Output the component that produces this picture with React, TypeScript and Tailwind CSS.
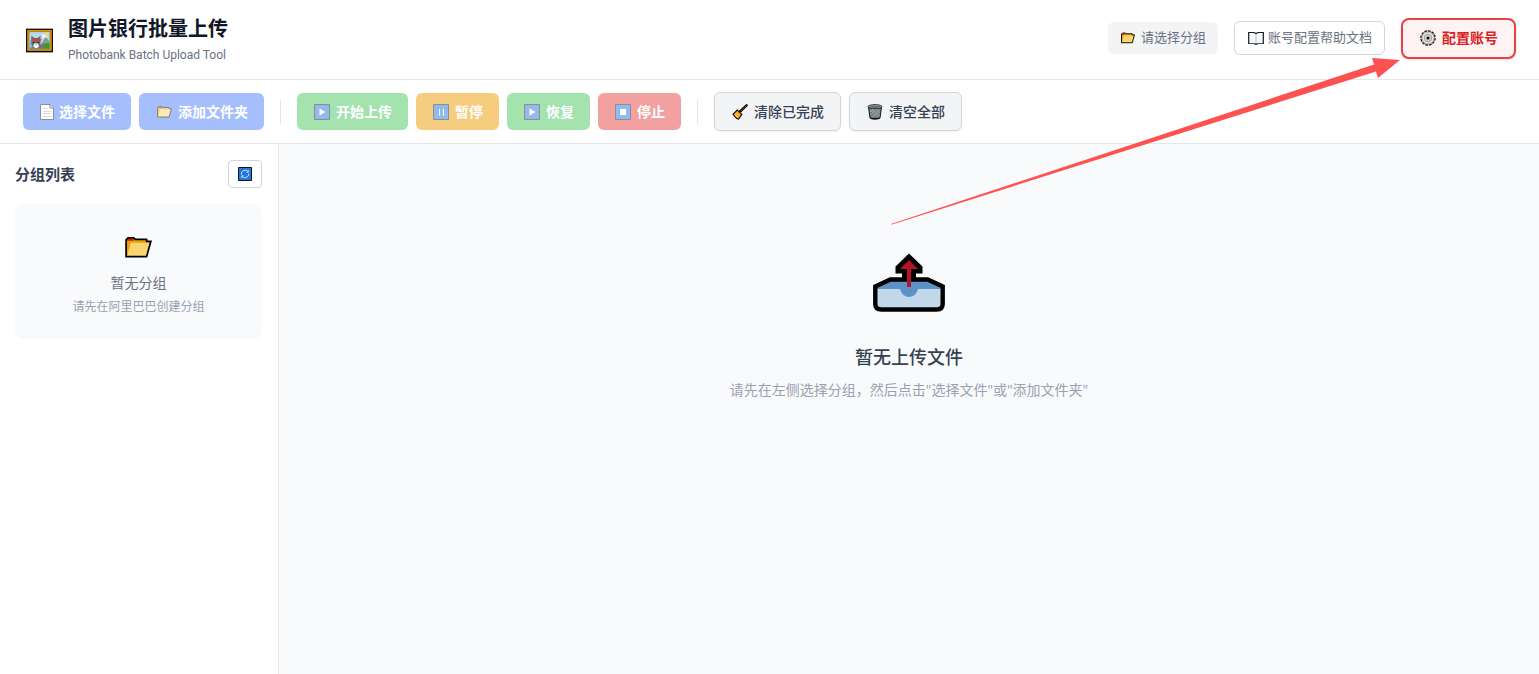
import React from 'react';
import clsx from 'clsx';

type IconProps = { className?: string };

function PictureIcon({ className }: IconProps) {
  return (
    <svg viewBox="0 0 28 26" className={className} aria-hidden="true">
      <rect x="0" y="0" width="28" height="26" fill="#aaa" />
      <rect x="0" y="1" width="28" height="24" fill="#0b0803" />
      <rect x="1.2" y="2" width="25.6" height="21.800" fill="#d99412" />
      <rect x="2.800" y="3.600" width="22.400" height="18.600" fill="#a8750f" />
      <rect x="3.500" y="4.300" width="21" height="17.400" fill="#b9d9f3" />
      <path d="M3.500 14l4-5 4 5v7.700h-8z" fill="#83b9e8" />
      <circle cx="22" cy="6.500" r="1.800" fill="#ffd75c" />
      <path d="M17 6.500h3v2h2v2h-5z" fill="#eef7fc" />
      <path d="M16 16l4.500-7 4 5v7.700H16z" fill="#7fa287" />
      <path d="M18 21.700l3.500-6h3v6z" fill="#31a30d" />
      <path d="M4 21.700c1-2.500 11-3.500 16-6l1.500 1-3 5z" fill="#707479" />
      <path d="M5.500 8l3 2.500h3.500l3-2.500v9l-2 3H7.500l-2-3z" fill="#666a72" />
      <path d="M6 11.500h9l1.500 1-1.500 .8H6z" fill="#e23d22" />
      <path d="M8.500 16h4l1 3-2 1.800H9.500l-2-1.800z" fill="#fff" />
      <path d="M7.500 14.500h1.200v1.200H7.500zM12 14.500h1.200v1.200H12z" fill="#111" />
      <path d="M9.600 17h2l-1 1.100z" fill="#e88478" />
    </svg>
  );
}

function FolderIcon({ className }: IconProps) {
  return (
    <svg viewBox="0 0 28 22" className={className} aria-hidden="true">
      <path d="M1 20.500V3l2-2h6l1.500 1.500h12V4.500H27l-4.500 16z" fill="#e8a30b" />
      <path d="M2 4V3l1.500-1.200h5L9 4z" fill="#e50c18" />
      <path d="M6 6h19.500l-3.500 14H2z" fill="#fbd572" />
      <path
        d="M1 20.500V3l2-2h6l1.500 1.500h12V4.500H27l-4.500 16z"
        fill="none"
        stroke="#000"
        strokeWidth="1.800"
      />
    </svg>
  );
}

function PageIcon({ className }: IconProps) {
  return (
    <svg viewBox="0 0 14 16" className={className} aria-hidden="true">
      <path d="M.5.5h9.500l3.500 3.500v11.500H.5z" fill="#fff" stroke="#222" />
      <path d="M10 .5v3.500h3.500" fill="#ddd" stroke="#222" />
      <path d="M2.500 4.500h5M2.500 7.500h9M2.500 9.500h9M2.500 12.500h9" stroke="#bbb" />
    </svg>
  );
}

function PlayIcon({ className }: IconProps) {
  return (
    <svg viewBox="0 0 16 16" className={className} aria-hidden="true">
      <path d="M.5.5h15v15H.5z" fill="#2878dc" stroke="#1c1f24" />
      <path d="M5.500 4.500l6 3.500-6 3.500z" fill="#fff" />
    </svg>
  );
}

function PauseIcon({ className }: IconProps) {
  return (
    <svg viewBox="0 0 16 16" className={className} aria-hidden="true">
      <path d="M.5.5h15v15H.5z" fill="#2878dc" stroke="#1c1f24" />
      <path d="M6.500 5v6.500M10.500 5v6.500" stroke="#fff" />
    </svg>
  );
}

function StopIcon({ className }: IconProps) {
  return (
    <svg viewBox="0 0 16 16" className={className} aria-hidden="true">
      <path d="M.5.5h15v15H.5z" fill="#2878dc" stroke="#1c1f24" />
      <path d="M5 5h6v6H5z" fill="#fff" />
    </svg>
  );
}

function RefreshIcon({ className }: IconProps) {
  return (
    <svg viewBox="0 0 14 14" className={className} aria-hidden="true">
      <path d="M.5.5h13v13H.5z" fill="#2476df" stroke="#10151c" />
      <g fill="none" stroke="#cfe4ff" strokeWidth="1">
        <path d="M3.300 7.500a3.700 3.700 0 0 1 6.200-3.200M10.700 6.500a3.700 3.700 0 0 1-6.200 3.200" />
        <path d="M10.200 3v2.200H8.500M3.800 11V8.800h1.700" />
      </g>
    </svg>
  );
}

function BroomIcon({ className }: IconProps) {
  return (
    <svg viewBox="0 0 17 17" className={className} aria-hidden="true">
      <path d="M8 8.500L15.500 1.500" stroke="#0c0a09" strokeWidth="2.600" strokeLinecap="round" />
      <path d="M9 7.500L15 2" stroke="#6b3b2c" strokeWidth="1" />
      <path d="M1 11l4.500-4.500 5 4.500L7 16l-2-.5z" fill="#f6b12b" stroke="#0c0a09" strokeWidth="1.200" />
      <path d="M5.500 8l4 3.500" stroke="#e98a1c" strokeWidth="1.200" />
      <path d="M3 11.500l3 2.500" stroke="#fddb78" />
    </svg>
  );
}

function TrashIcon({ className }: IconProps) {
  return (
    <svg viewBox="0 0 16 16" className={className} aria-hidden="true">
      <path d="M1.500 3l1.500 11c1 1.500 9 1.500 10 0l1.500-11z" fill="#737d80" stroke="#16191b" />
      <path
        d="M3 6l9 8M5 5l8 7M9 5l4 4M13 6l-9 8M10 5l-7 6M7 5L3 8"
        stroke="#b0b9bb"
        strokeWidth=".6"
      />
      <ellipse cx="8" cy="2.600" rx="7" ry="2" fill="#a3adaf" stroke="#16191b" strokeWidth=".8" />
      <ellipse cx="8" cy="2.800" rx="5.200" ry="1" fill="#5d6669" />
      <path d="M3.500 13.700c2 1.300 7 1.300 9 0" stroke="#0c0f10" strokeWidth="1.200" fill="none" />
    </svg>
  );
}

function BookIcon({ className }: IconProps) {
  return (
    <svg viewBox="0 0 16 14" className={className} aria-hidden="true">
      <path d="M.7 1.500H6l2 1 2-1h5.300v11H10l-2 .8-2-.8H.7z" fill="#f6f6f6" stroke="#111820" strokeWidth="1.200" />
      <path d="M8 3v9.500" stroke="#c4c4c4" strokeWidth="1.200" />
      <path d="M1 12.500h5l2 .8 2-.8h5" stroke="#345c78" fill="none" />
    </svg>
  );
}

function GearIcon({ className }: IconProps) {
  return (
    <svg viewBox="0 0 16 16" className={className} aria-hidden="true">
      <circle cx="8" cy="8" r="7.100" fill="none" stroke="#111" strokeWidth="1.300" strokeDasharray="2.600 1.100" />
      <circle cx="8" cy="8" r="6.300" fill="#e2e2e2" stroke="#333" strokeWidth=".5" />
      <circle cx="8" cy="8" r="3.700" fill="#d2d2d2" stroke="#8a8a8a" strokeWidth=".7" />
      <circle cx="8" cy="8" r="1.500" fill="#050505" />
    </svg>
  );
}

function OutboxIcon({ className }: IconProps) {
  return (
    <svg viewBox="0 0 72 60" className={className} aria-hidden="true">
      <path d="M2 33L17 26.500h38L70 33v18q0 6-6 6H8q-6 0-6-6z" fill="#c1d8eb" />
      <path d="M3 36l15-9h36l15 9z" fill="#5b93c8" />
      <path d="M27 35a9 9 0 0 0 18 0z" fill="#5b93c8" />
      <path
        d="M2.300 33.500l15-7h37.400l15 7V51q0 5.500-6 5.500H8.300q-6 0-6-5.500z"
        fill="none"
        stroke="#000"
        strokeWidth="4.400"
        strokeLinejoin="miter"
      />
      <path d="M36 .5L49.500 13.500V20.500H43V28H29V20.500h-6.500v-7z" fill="#000" />
      <path d="M36 7l9 9h-7v18h-4V16h-7z" fill="#b41426" />
    </svg>
  );
}

function PointerArrow() {
  return (
    <svg
      viewBox="0 0 510 168"
      className="pointer-events-none absolute top-[57px] right-[138px] h-[168px] w-[510px]"
      aria-hidden="true"
    >
      <path d="M0 167L483 7.500 481 1 509 3 487 21 485 14.500 1 167.500z" fill="#fd5250" />
    </svg>
  );
}

type ActionProps = {
  label: string;
  tone: string;
  icon: React.ReactNode;
};

function UploadAction({ label, tone, icon }: ActionProps) {
  return (
    <button
      type="button"
      disabled
      className={clsx(
        'flex h-[37px] items-center rounded-md px-4 text-sm font-bold text-white disabled:opacity-50',
        tone
      )}
    >
      {icon}
      <span>{label}</span>
    </button>
  );
}

function ClearAction({ label, icon }: { label: string; icon: React.ReactNode }) {
  return (
    <button
      type="button"
      className="flex h-[39px] items-center rounded-md border border-gray-300 bg-gray-100 px-4 text-sm font-medium text-gray-700 shadow-xs"
    >
      {icon}
      <span>{label}</span>
    </button>
  );
}

function Header() {
  return (
    <header className="flex h-20 items-center justify-between border-b border-gray-200 bg-white px-[23px] pb-[3px]">
      <div className="flex items-center gap-3 pt-1">
        <div className="flex w-[33px] justify-center">
          <PictureIcon className="h-[25px] w-[27px]" />
        </div>
        <div className="flex flex-col">
          <h1 className="text-xl leading-[30px] font-bold text-gray-900">图片银行批量上传</h1>
          <p className="font-['Roboto',sans-serif] text-xs leading-[22px] text-gray-500">
            Photobank Batch Upload Tool
          </p>
        </div>
      </div>

      <div className="flex items-center gap-4">
        <div className="flex h-8 items-center rounded-md bg-gray-100 px-3 text-[13px] text-gray-500">
          <FolderIcon className="mr-[6px] ml-px h-3 w-3.5" />
          <span>请选择分组</span>
        </div>
        <button
          type="button"
          className="flex h-[34px] items-center rounded-md border border-gray-300 bg-white px-3 text-[13px] text-gray-500"
        >
          <BookIcon className="mr-1 ml-px h-3.5 w-4" />
          <span>账号配置帮助文档</span>
        </button>
        <button
          type="button"
          className="flex h-[41px] items-center rounded-lg border-2 border-[#e54343] bg-red-50 px-4 text-sm font-bold text-[#d91f1f] shadow-sm"
        >
          <GearIcon className="mr-[6px] ml-px h-4 w-4" />
          <span>配置账号</span>
        </button>
      </div>
    </header>
  );
}

function Toolbar() {
  return (
    <div className="flex h-16 items-center border-b border-gray-200 bg-white px-[23px]">
      <div className="flex items-center gap-2">
        <UploadAction
          label="选择文件"
          tone="bg-[#4b81f9]"
          icon={<PageIcon className="mr-[5px] ml-px h-4 w-3.5" />}
        />
        <UploadAction
          label="添加文件夹"
          tone="bg-[#4b81f9]"
          icon={<FolderIcon className="mr-[6px] ml-0.5 h-3 w-[15px]" />}
        />
      </div>
      <div className="mx-4 h-6 w-px bg-gray-200" />
      <div className="flex items-center gap-2">
        <UploadAction
          label="开始上传"
          tone="bg-[#4bc75f]"
          icon={<PlayIcon className="mr-[6px] ml-px h-4 w-4" />}
        />
        <UploadAction
          label="暂停"
          tone="bg-[#ef9b01]"
          icon={<PauseIcon className="mr-[6px] ml-px h-4 w-4" />}
        />
        <UploadAction
          label="恢复"
          tone="bg-[#4bc75f]"
          icon={<PlayIcon className="mr-[6px] ml-px h-4 w-4" />}
        />
        <UploadAction
          label="停止"
          tone="bg-[#e74343]"
          icon={<StopIcon className="mr-[6px] ml-px h-4 w-4" />}
        />
      </div>
      <div className="mx-4 h-6 w-px bg-gray-200" />
      <div className="flex items-center gap-2">
        <ClearAction label="清除已完成" icon={<BroomIcon className="mr-[6px] ml-px h-4 w-4" />} />
        <ClearAction label="清空全部" icon={<TrashIcon className="mr-[6px] ml-px h-4 w-4" />} />
      </div>
    </div>
  );
}

function Sidebar() {
  return (
    <aside className="w-[279px] shrink-0 border-r border-gray-200 bg-white pt-4 pr-4 pl-[15px]">
      <div className="flex items-center justify-between">
        <h2 className="text-[15px] font-bold text-gray-700">分组列表</h2>
        <button
          type="button"
          aria-label="刷新"
          className="flex h-7 w-[34px] items-center justify-center rounded-sm border border-gray-300 bg-white"
        >
          <RefreshIcon className="h-3.5 w-3.5" />
        </button>
      </div>
      <div className="mt-4 flex flex-col items-center rounded-lg bg-[#f9fafc] pt-[33px] pb-5">
        <FolderIcon className="mb-3 h-[21px] w-[27px]" />
        <p className="text-sm leading-[25px] text-gray-500">暂无分组</p>
        <p className="text-xs leading-6 text-gray-400">请先在阿里巴巴创建分组</p>
      </div>
    </aside>
  );
}

function EmptyState() {
  return (
    <main className="flex flex-1 flex-col items-center bg-[#f9fafc] pt-[109px]">
      <OutboxIcon className="h-[60px] w-[72px]" />
      <h2 className="mt-8 text-lg leading-6 font-medium text-gray-700">暂无上传文件</h2>
      <p className="mt-2 text-sm leading-[26px] text-gray-400">
        请先在左侧选择分组，然后点击"选择文件"或"添加文件夹"
      </p>
    </main>
  );
}

function App() {
  return (
    <div className="relative flex min-h-screen flex-col bg-white font-['Open_Sans','Noto_Sans_CJK_SC',sans-serif]">
      <Header />
      <Toolbar />
      <div className="flex flex-1">
        <Sidebar />
        <EmptyState />
      </div>
      <PointerArrow />
    </div>
  );
}

export default App;
